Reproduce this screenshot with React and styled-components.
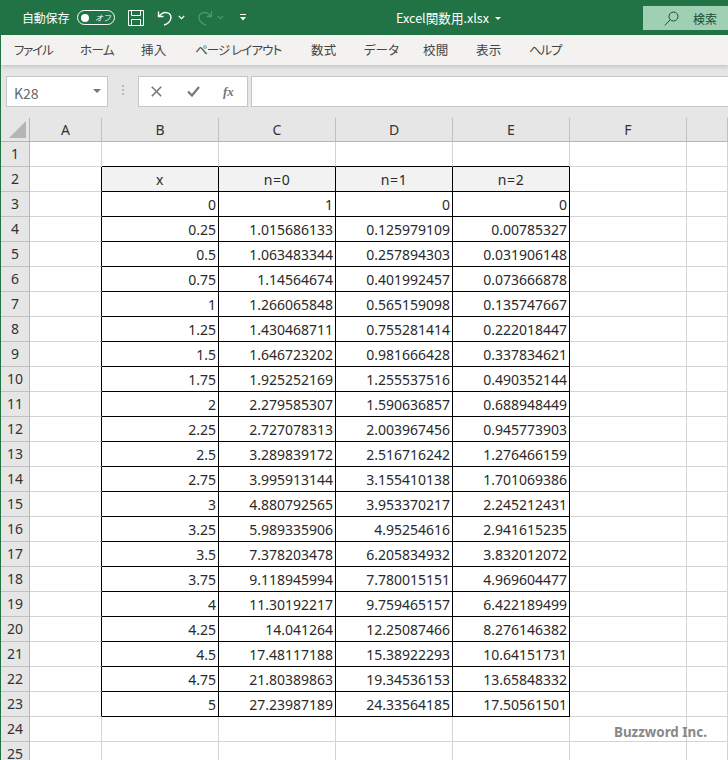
import React from "react";
import styled, { createGlobalStyle } from "styled-components";

const Global = createGlobalStyle`
  html, body { margin: 0; padding: 0; background: #fff; overflow: hidden; }
  body { font-family: "Noto Sans CJK JP", "Noto Sans", sans-serif; }
`;
const Page = styled.div`
  position: relative; width: 728px; height: 760px; overflow: hidden;
  border-left: 1px solid #217346; box-sizing: border-box; background: #e6e6e6;
`;
const TitleBar = styled.div`
  height: 35px; margin-left: -1px; background: #217346; color: #fff; display: flex; align-items: center;
  padding-left: 22px; font-size: 12px; position: relative;
`;
const AutoSave = styled.span`font-size: 12px; letter-spacing: -.2px; width: 49px; white-space: nowrap;`;
const Toggle = styled.span`
  width: 38px; height: 15px; border: 1px solid #fff; border-radius: 8px; margin-left: 6px; display: flex; align-items: center; box-sizing: border-box;
  padding-left: 3px; gap: 6px; font-size: 8px; font-style: italic; line-height: 1; white-space: nowrap;
  &::before { content: ""; width: 8px; height: 8px; border-radius: 50%; background: #fff; flex: none; }
`;
const QuickIcons = styled.div`display: flex; align-items: center; margin-left: 13px;`;
const Spacer = styled.span`width: ${p => p.$w}px; flex: none;`;
const FileName = styled.div`
  position: absolute; left: 396px; top: 9px; font-size: 12.6px; line-height: 17px; white-space: nowrap; display: flex; align-items: center; gap: 6px;
`;
const SearchBox = styled.div`
  position: absolute; left: 643px; top: 6px; width: 85px; height: 24px; background: #a0d0b3; color: #214a33;
  display: flex; align-items: center; font-size: 12px; padding-left: 21px; gap: 14px; box-sizing: border-box;
`;
const MenuBar = styled.div`
  height: 30px; background: #f3f2f1; font-size: 12.5px; color: #444; box-shadow: 0 2px 4px rgba(0,0,0,.14);
  position: relative; font-feature-settings: "palt";
`;
const MenuItem = styled.span`position: absolute; left: ${p => p.$x}px; top: 6px; line-height: 18px; white-space: nowrap; letter-spacing: ${p => p.$sp}px;`;
const FormulaRow = styled.div`
  height: 53px; display: flex; align-items: flex-start; padding: 11px 0 0 5px; box-sizing: border-box;
`;
const NameBox = styled.div`
  width: 102px; height: 31px; border: 1px solid #c6c6c6; background: #fff; box-sizing: border-box; display: flex; align-items: center; justify-content: space-between;
  padding: 3px 6px 0 7px; color: #666; font-size: 14px;
`;
const Caret = styled.span`width: 0; height: 0; border: 4px solid transparent; border-top: 4px solid #777; border-bottom: 0; margin-top: -4px;`;
const SmallCaret = styled(Caret)`border-width: 3px 3px 0; border-top-color: #fff; margin-top: 1px;`;
const Dots = styled.div`width: 30px; flex: none; display: flex; flex-direction: column; align-items: center; gap: 2px; padding-top: 9px;
  span { width: 2px; height: 2px; background: #bbb; }`;
const FormulaBtns = styled.div`
  width: 110px; height: 31px; flex: none; border: 1px solid #c6c6c6; background: #fff; box-sizing: border-box; display: flex; align-items: center; padding-left: 12px; color: #777;
`;
const CheckWrap = styled.span`display: flex; margin-left: 25px;`;
const Fx = styled.span`font-family: "Liberation Serif", serif; font-style: italic; font-size: 13px; font-weight: 700; margin-left: 23px; color: #777;`;
const FormulaInput = styled.div`flex: 1; height: 31px; margin-left: 3px; border: 1px solid #c6c6c6; border-right: 0; background: #fff; box-sizing: border-box;`;
const Sheet = styled.div`
  display: grid; height: 642px;
  grid-template-columns: 29px 72px 117px 117px 117px 117px 117px 41px;
  grid-template-rows: 24px repeat(25, 25px);
  background: #fff; font-size: 14px;
`;
const Corner = styled.div`
  background: #e6e6e6; border-right: 1px solid #b5b5b5; border-bottom: 1px solid #b5b5b5; box-sizing: border-box; position: relative;
  &::after { content: ""; position: absolute; right: 3px; bottom: 3px; border-style: solid; border-width: 0 0 17px 17px; border-color: transparent transparent #b5b5b5 transparent; }
`;
const ColHead = styled.div`
  background: #e6e6e6; border-right: 1px solid #c0c0c0; border-bottom: 1px solid #b5b5b5; box-sizing: border-box; color: #333;
  display: flex; align-items: center; justify-content: center; font-size: 14px; font-family: "Noto Sans", sans-serif;
`;
const RowHead = styled.div`
  background: #e6e6e6; border-right: 1px solid #b5b5b5; border-bottom: 1px solid #c0c0c0; box-sizing: border-box; color: #333; padding-bottom: 2px;
  display: flex; align-items: center; justify-content: center; font-size: 14px; font-family: "Noto Sans", sans-serif;
`;
const Cell = styled.div`
  box-sizing: border-box; border-right: 1px solid ${p => p.$r ? "#000" : "#d4d4d4"}; border-bottom: 1px solid ${p => p.$b ? "#000" : "#d4d4d4"};
  background: ${p => p.$head ? "#f2f2f2" : "#fff"}; color: #2a2a2a; display: flex; align-items: center;
  justify-content: ${p => p.$head ? "center" : "flex-end"}; letter-spacing: ${p => p.$head ? ".6px" : "0"};
  padding: 0 2px; font-family: "Noto Sans", sans-serif; white-space: nowrap; overflow: hidden;
`;
const Watermark = styled.div`
  position: absolute; left: 613px; top: 723px; color: #888; font: 700 13.4px/18px "Noto Sans", sans-serif; white-space: nowrap;
`;

const Save = () => <svg width="16" height="16" viewBox="0 0 16 16" fill="none" stroke="#fff" strokeWidth="1"><path d="M.5.5h15v15H.5zM3.5.5v5h9v-5M3.5 15.5v-6h9v6"/></svg>;
const Undo = () => <svg width="16" height="16" viewBox="0 0 16 16" fill="none" stroke="#fff" strokeWidth="1.4"><path d="M1.5 1.5v5h5M1.5 6.5 5 3.5c3-2 9-1 9 4 0 4-4 7-7 7.5"/></svg>;
const Redo = () => <svg width="16" height="16" viewBox="0 0 16 16" fill="none" stroke="#4b9a6c" strokeWidth="1.3"><path d="M14.5 1.5v5h-5M14.5 6.5 11 3.5c-3-2-9-1-9 4 0 4 4 7 7 7.5"/></svg>;
const Chev = ({ c = "#fff" }) => <svg width="7" height="5" viewBox="0 0 7 5" fill="none" stroke={c} strokeWidth="1.2"><path d="M.8 1 3.5 3.6 6.2 1"/></svg>;
const More = () => <svg width="6" height="7" viewBox="0 0 6 7" fill="#fff"><path d="M0 0h6v1H0zM0 3h6L3 6.5z"/></svg>;
const Mag = () => <svg width="15" height="15" viewBox="0 0 15 15" fill="none" stroke="#214a33" strokeWidth="1"><circle cx="9.5" cy="5.5" r="4.5"/><path d="M6 9 .8 14.4"/></svg>;
const X = () => <svg width="11" height="11" viewBox="0 0 11 11" fill="none" stroke="#777" strokeWidth="1.6"><path d="M.8.8l9.4 9.4M10.2.8.8 10.2"/></svg>;
const Check = () => <svg width="13" height="11" viewBox="0 0 13 11" fill="none" stroke="#777" strokeWidth="2.2"><path d="M1 5.5 5 9.5 12 1"/></svg>;

const menu = [["ファイル",14,-1.2],["ホーム",80,-.6],["挿入",141,.3],["ページ レイアウト",195,-.9],["数式",311,.3],["データ",364,0],["校閲",423,.3],["表示",476,.3],["ヘルプ",529,-1.2]];
const cols = ["A","B","C","D","E","F",""];
const data = [
["0","1","0","0"],["0.25","1.015686133","0.125979109","0.00785327"],["0.5","1.063483344","0.257894303","0.031906148"],
["0.75","1.14564674","0.401992457","0.073666878"],["1","1.266065848","0.565159098","0.135747667"],["1.25","1.430468711","0.755281414","0.222018447"],
["1.5","1.646723202","0.981666428","0.337834621"],["1.75","1.925252169","1.255537516","0.490352144"],["2","2.279585307","1.590636857","0.688948449"],
["2.25","2.727078313","2.003967456","0.945773903"],["2.5","3.289839172","2.516716242","1.276466159"],["2.75","3.995913144","3.155410138","1.701069386"],
["3","4.880792565","3.953370217","2.245212431"],["3.25","5.989335906","4.95254616","2.941615235"],["3.5","7.378203478","6.205834932","3.832012072"],
["3.75","9.118945994","7.780015151","4.969604477"],["4","11.30192217","9.759465157","6.422189499"],["4.25","14.041264","12.25087466","8.276146382"],
["4.5","17.48117188","15.38922293","10.64151731"],["4.75","21.80389863","19.34536153","13.65848332"],["5","27.23987189","24.33564185","17.50561501"]];

const rows = Array.from({ length: 25 }, (_, i) => i + 1);
const cellContent = (row, c) => {
  if (c < 1 || c > 4) return "";
  if (row === 2) return ["x","n=0","n=1","n=2"][c - 1];
  if (row >= 3 && row <= 23) return data[row - 3][c - 1];
  return "";
};
const inTable = (row) => row >= 2 && row <= 23;

export default function App() {
  return (
    <Page>
      <Global />
      <TitleBar>
        <AutoSave>自動保存</AutoSave>
        <Toggle>オフ</Toggle>
        <QuickIcons>
          <Save />
          <Spacer $w={13} />
          <Undo />
          <Spacer $w={5} />
          <Chev />
          <Spacer $w={12} />
          <Redo />
          <Spacer $w={4} />
          <Chev c="#4b9a6c" />
          <Spacer $w={16} />
          <More />
        </QuickIcons>
        <FileName>Excel関数用.xlsx <SmallCaret /></FileName>
        <SearchBox><Mag />検索</SearchBox>
      </TitleBar>
      <MenuBar>
        {menu.map(([t, x, sp]) => <MenuItem key={t} $x={x - 1} $sp={sp}>{t}</MenuItem>)}
      </MenuBar>
      <FormulaRow>
        <NameBox>K28<Caret /></NameBox>
        <Dots><span /><span /><span /></Dots>
        <FormulaBtns><X /><CheckWrap><Check /></CheckWrap><Fx>fx</Fx></FormulaBtns>
        <FormulaInput />
      </FormulaRow>
      <Sheet>
        <Corner />
        {cols.map((c, i) => <ColHead key={i}>{c}</ColHead>)}
        {rows.map(r => (
          <React.Fragment key={r}>
            <RowHead>{r}</RowHead>
            {cols.map((c, col) => {
              const right = inTable(r) && col <= 4;
              const bottom = r <= 23 && col >= 1 && col <= 4;
              return <Cell key={col} $r={right} $b={bottom} $head={r === 2 && col >= 1 && col <= 4}>{cellContent(r, col)}</Cell>;
            })}
          </React.Fragment>
        ))}
      </Sheet>
      <Watermark>Buzzword Inc.</Watermark>
    </Page>
  );
}
